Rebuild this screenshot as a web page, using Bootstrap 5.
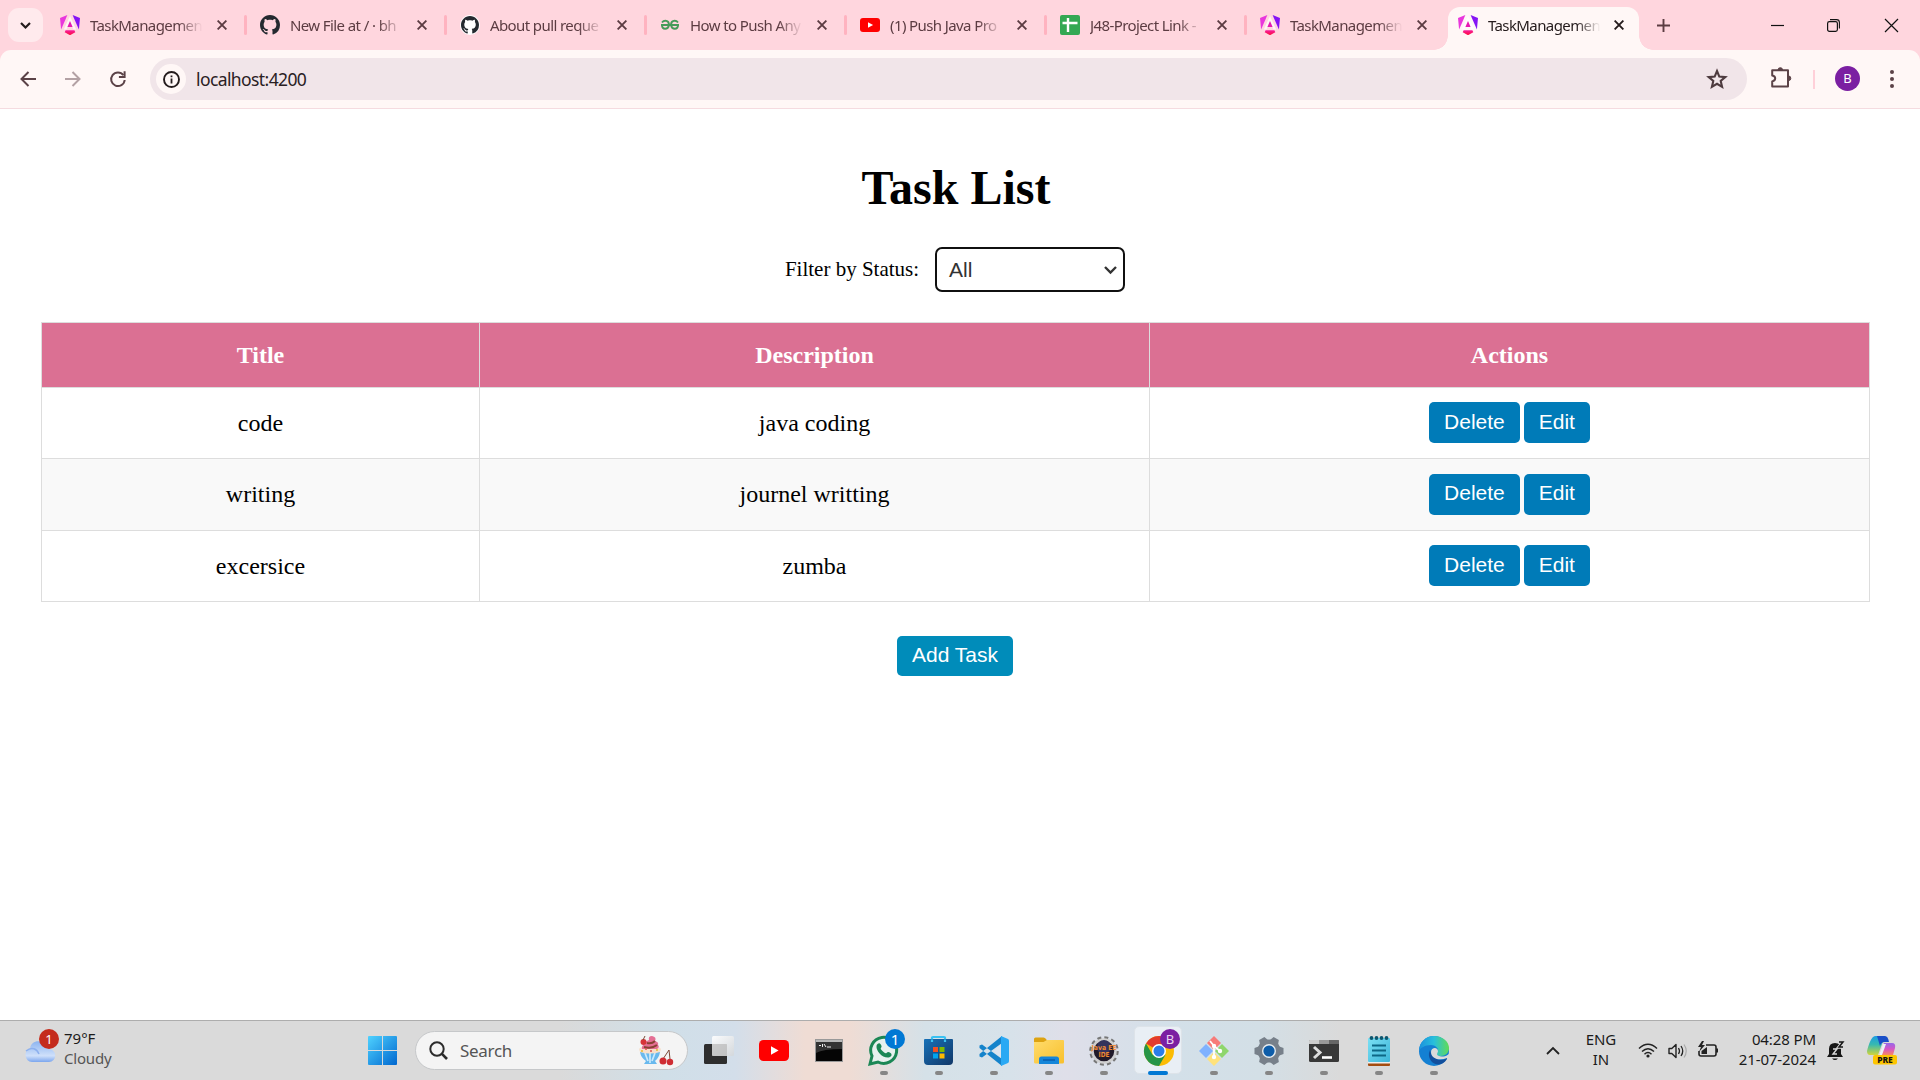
<!DOCTYPE html>
<html lang="en">
<head>
<meta charset="utf-8">
<title>Task List</title>
<link rel="stylesheet" href="https://cdn.jsdelivr.net/npm/bootstrap@5.3.0/dist/css/bootstrap.min.css">
<style>
body{width:1920px;height:1080px;overflow:hidden;background:#fff;color:#000;font-family:"Liberation Serif",serif}
svg{display:block;flex:none;overflow:visible}
.chrome-ui,.taskbar{font-family:"Noto Sans","Open Sans",sans-serif}
.tabstrip{height:50px;background:#ffd6de}
.tabsearch{width:35px;height:34px;margin:8px 4px 8px 8px;border-radius:11px;background:#ffeaed}
.tab{width:200px;height:50px;padding-left:13px;color:#5c3c42;position:relative}
.tab .fav{width:20px;height:20px}
.tab-title{width:116px;margin-left:10px;font-size:15px;letter-spacing:-.6px;line-height:24px;white-space:nowrap}
.fade-end{-webkit-mask-image:linear-gradient(90deg,#000 76%,transparent 97%);mask-image:linear-gradient(90deg,#000 76%,transparent 97%)}
.tab .x{margin-left:11px}
.tab.sep::after{content:"";position:absolute;right:0;top:15px;width:3px;height:20px;background:#ffb3c0;border-radius:2px}
.tab.active{width:191px;height:43px;margin-top:7px;margin-left:1px;padding-left:10px;padding-bottom:7px;border-radius:12px 12px 0 0;background:#fff7f6;color:#241b1c}
.tab.active::before,.tab.active::after{content:"";position:absolute;bottom:0;width:14px;height:14px}
.tab.active::before{left:-14px;background:radial-gradient(circle at 0 0,transparent 13.5px,#fff7f6 14px)}
.tab.active::after{right:-14px;background:radial-gradient(circle at 100% 0,transparent 13.5px,#fff7f6 14px)}
.wincontrols{color:#5c3c42}
.toolwrap{background:#ffd6de}
.toolbar{height:59px;background:#fff7f6;border-radius:11px 11px 0 0;border-bottom:1px solid #f5dbe0;padding-left:20px;color:#5b4247}
.omni{width:1597px;height:42px;border-radius:21px;background:#f1e5e9;margin-left:24px;padding:0 20px 0 6px}
.info{width:30px;height:30px;border-radius:50%;background:#fff7f6}
.url{font-size:17.5px;letter-spacing:-.6px;margin-left:10px;color:#2a2023}
.avatar{width:25px;height:25px;border-radius:50%;background:#7b1fa2;color:#fff;font-size:13px}
.page-area{height:911px;padding:0 51px 0 41px}
h1{font-size:48px;font-weight:700;line-height:56px;margin:51px 0 0;padding-left:2px}
.filter{margin-top:31px;height:45px;font-size:21px}
.status-select{width:190px;height:45px;border:2.5px solid #101010;border-radius:7px;font:21px "Liberation Sans",sans-serif;color:#333;padding:0 6px 0 12px;margin-left:16px;background:#fff}
.tasks{margin-top:30px;width:1829px;table-layout:fixed;border-collapse:collapse;font-size:24px;text-align:center;line-height:28px}
.tasks th,.tasks td{border:1px solid #ddd;padding:0}
.tasks th{background:#db7093;color:#fff;height:65px}
.tasks td{height:71px;padding-bottom:1px}
.tasks tbody tr:nth-child(even){background:#f9f9f9}
.tasks tbody tr:nth-child(even) td{height:72px}
.act{height:41px;border:0;border-radius:5px;background:#007bb8;color:#fff;font:21px "Liberation Sans",sans-serif;padding:0 15px 2px}
.act.add{background:#008cba;height:40px;margin-top:34px}
.taskbar{height:60px;border-top:1px solid #adadad;background:linear-gradient(90deg,#dadada 0,#dadada 560px,#d0dfe8 665px,#d3deea 735px,#efdcd4 805px,#efdcd4 850px,#d5e1e8 925px,#d7e2ea 1010px,#dfdfe9 1065px,#d3e0e9 1170px,#d3dfe6 1260px,#dadada 1340px,#dadada 100%);font-size:15px;line-height:20px;color:#1b1b1b}
.weather{width:368px;padding-left:24px;padding-bottom:5px}
.badge-n{position:absolute;width:20px;height:20px;border-radius:50%;color:#fff;font-size:13px;line-height:20px;text-align:center}
.searchbox{width:273px;height:39px;border-radius:20px;background:#f4f4f4;border:1px solid #c6c8ca;margin-left:18px;padding-left:13px;font-size:17px;color:#555}
.app{width:55px;height:59px;position:relative}
.app.run::after{content:"";position:absolute;left:24px;bottom:5px;width:8px;height:4px;border-radius:2px;background:#868686}
.app.cur::before{content:"";position:absolute;left:3px;top:5px;width:48px;height:48px;background:#e9eff5;border:1px solid #dde3e9;border-radius:5px}
.app.cur::after{left:17px;width:20px;background:#0078d4}
.app svg{position:relative}
.tray{margin-left:84px;height:59px}
.tray-text{padding-bottom:3px;letter-spacing:-.1px}
</style>
<script src="https://cdn.jsdelivr.net/npm/bootstrap@5.3.0/dist/js/bootstrap.bundle.min.js"></script>
</head>
<body>
<svg width="0" height="0" class="position-absolute">
<defs>
<linearGradient id="ng2" x1="0" y1="0" x2="0" y2="1"><stop offset="0" stop-color="#f51ea0"/><stop offset="1" stop-color="#ff0b3a"/></linearGradient>
<linearGradient id="win" x1="0" y1="0" x2="1" y2="1"><stop offset="0" stop-color="#4fd2ff"/><stop offset="1" stop-color="#0067cf"/></linearGradient>
<linearGradient id="cld" x1="0" y1="0" x2="0" y2="1"><stop offset="0" stop-color="#8cb4f0"/><stop offset=".7" stop-color="#cfe0fa"/><stop offset="1" stop-color="#7ba6ee"/></linearGradient>
<linearGradient id="tv" x1="0" y1="0" x2="1" y2="1"><stop offset="0" stop-color="#fff"/><stop offset="1" stop-color="#d4d7da"/></linearGradient>
<linearGradient id="store" x1="0" y1="0" x2="1" y2="1"><stop offset="0" stop-color="#1671b8"/><stop offset="1" stop-color="#113768"/></linearGradient>
<linearGradient id="fold" x1="0" y1="0" x2="1" y2="1"><stop offset="0" stop-color="#ffdc6c"/><stop offset="1" stop-color="#f8bf2c"/></linearGradient>
<linearGradient id="edge1" x1="0" y1="0" x2="1" y2="0"><stop offset="0" stop-color="#1c91dd"/><stop offset=".5" stop-color="#28bfdc"/><stop offset="1" stop-color="#62dc55"/></linearGradient>
<linearGradient id="note" x1="0" y1="0" x2="1" y2="1"><stop offset="0" stop-color="#7be0f4"/><stop offset="1" stop-color="#3bb4d8"/></linearGradient>
<linearGradient id="cop1" x1="0" y1="0" x2="0" y2="1"><stop offset="0" stop-color="#1b9de2"/><stop offset=".45" stop-color="#37b9b0"/><stop offset="1" stop-color="#d2d53a"/></linearGradient>
<linearGradient id="cop2" x1="0" y1="0" x2="0" y2="1"><stop offset="0" stop-color="#9568e8"/><stop offset=".5" stop-color="#d656c5"/><stop offset="1" stop-color="#f98860"/></linearGradient>
<symbol id="angular" viewBox="0 0 20 20"><path d="M0 3 7.4 0 1.1 14.5Z" fill="#e937dc"/><path d="M20 3 12.6 0 18.9 14.5Z" fill="#8514f5"/><path d="M5.6 15.2h8.800l.9 2.100L10 20.200l-5.300-2.900Z" fill="url(#ng2)"/><path d="M10 1 3.800 14.500h2.600L7.500 12h5l1.100 2.500h2.600L10 1Z" fill="#fff" fill-opacity=".75"/><path d="M10 6 7.400 12h5.200Z" fill="#e61bb1"/></symbol>
<symbol id="github" viewBox="0 0 16 16"><path d="M8 0C3.58 0 0 3.58 0 8c0 3.54 2.29 6.53 5.47 7.59.4.07.55-.17.55-.38 0-.19-.01-.82-.01-1.49-2.01.37-2.53-.49-2.69-.94-.09-.23-.48-.94-.82-1.13-.28-.15-.68-.52-.01-.53.63-.01 1.08.58 1.23.82.72 1.21 1.87.87 2.33.66.07-.52.28-.87.51-1.07-1.78-.2-3.64-.89-3.64-3.95 0-.87.31-1.59.82-2.15-.08-.2-.36-1.02.08-2.12 0 0 .67-.21 2.2.82.64-.18 1.32-.27 2-.27s1.36.09 2 .27c1.53-1.04 2.2-.82 2.2-.82.44 1.1.16 1.92.08 2.12.51.56.82 1.27.82 2.15 0 3.07-1.87 3.75-3.65 3.95.29.25.54.73.54 1.48 0 1.07-.01 1.93-.01 2.2 0 .21.15.46.55.38A8 8 0 0 0 16 8c0-4.42-3.58-8-8-8Z" fill="#24292f"/></symbol>
<symbol id="close" viewBox="0 0 10 10"><path d="M.6.6l8.800 8.800M9.400.6.6 9.400" stroke="currentColor" stroke-width="1.900"/></symbol>
<symbol id="youtube" viewBox="0 0 30 21"><rect width="30" height="21" rx="4.500" fill="#f00"/><path d="M12 6.200v8.600l7.600-4.300Z" fill="#fff"/></symbol>
</defs></svg>

<header class="chrome-ui">
<div class="tabstrip d-flex">
 <div class="tabsearch d-flex align-items-center justify-content-center"><svg width="11" height="7" viewBox="0 0 11 7"><path d="M1 1l4.500 4.500L10 1" fill="none" stroke="#241b1c" stroke-width="2.200"/></svg></div>
 <div class="tab sep d-flex align-items-center"><svg class="fav"><use href="#angular"/></svg><div class="tab-title fade-end">TaskManagemen</div><svg class="x" width="10" height="10"><use href="#close"/></svg></div>
 <div class="tab sep d-flex align-items-center"><svg class="fav"><use href="#github"/></svg><div class="tab-title fade-end">New File at / · bh</div><svg class="x" width="10" height="10"><use href="#close"/></svg></div>
 <div class="tab sep d-flex align-items-center"><svg class="fav"><circle cx="10" cy="10" r="10" fill="#fff"/><use href="#github" x="1" y="1" width="18" height="18"/></svg><div class="tab-title fade-end">About pull reque</div><svg class="x" width="10" height="10"><use href="#close"/></svg></div>
 <div class="tab sep d-flex align-items-center"><svg class="fav" viewBox="0 0 20 20"><path d="M2 7.500C4 5 9 5 9 10H2c0 5 6 5 7 0M18 7.500C16 5 11 5 11 10h7c0 5-6 5-7 0M1 10h18" fill="none" stroke="#459b59" stroke-width="1.900"/></svg><div class="tab-title fade-end">How to Push Any</div><svg class="x" width="10" height="10"><use href="#close"/></svg></div>
 <div class="tab sep d-flex align-items-center"><svg class="fav"><use href="#youtube" x="0" y="3" width="20" height="14"/></svg><div class="tab-title fade-end">(1) Push Java Pro</div><svg class="x" width="10" height="10"><use href="#close"/></svg></div>
 <div class="tab sep d-flex align-items-center"><svg class="fav"><rect width="20" height="20" rx="2" fill="#34a853"/><path d="M2.500 8h15M8 3v14" stroke="#fff" stroke-width="2.400"/></svg><div class="tab-title fade-end">J48-Project Link -</div><svg class="x" width="10" height="10"><use href="#close"/></svg></div>
 <div class="tab d-flex align-items-center"><svg class="fav"><use href="#angular"/></svg><div class="tab-title fade-end">TaskManagemen</div><svg class="x" width="10" height="10"><use href="#close"/></svg></div>
 <div class="tab active d-flex align-items-center"><svg class="fav"><use href="#angular"/></svg><div class="tab-title fade-end">TaskManagemen</div><svg class="x" width="10" height="10" style="margin-left:10px"><use href="#close"/></svg></div>
 <div class="wincontrols d-flex align-items-center flex-grow-1">
  <svg width="13" height="13" viewBox="0 0 13 13" style="margin-left:18px;margin-right:101px"><path d="M6.500 0v13M0 6.500h13" stroke="currentColor" stroke-width="1.900"/></svg>
  <svg width="13" height="13" viewBox="0 0 13 13"><path d="M0 6.500h13" stroke="#111" stroke-width="1.200"/></svg>
  <svg width="13" height="13" viewBox="0 0 13 13" style="margin-left:43px"><path d="M3 .6h6.500q2.900 0 2.900 2.900v6" fill="none" stroke="#111" stroke-width="1.100"/><rect x=".6" y="2.600" width="9.800" height="9.800" rx="1.800" fill="none" stroke="#111" stroke-width="1.200"/></svg>
  <svg width="13" height="13" viewBox="0 0 13 13" style="margin-left:45px"><path d="M0 0l13 13M13 0 0 13" stroke="#111" stroke-width="1.200"/></svg>
 </div>
</div>
<div class="toolwrap"><div class="toolbar d-flex align-items-center">
 <svg width="16" height="16" viewBox="0 0 16 16"><path d="M16 8H2M8.500 1 1.500 8l7 7" fill="none" stroke="currentColor" stroke-width="2"/></svg>
 <svg width="16" height="16" viewBox="0 0 16 16" style="margin-left:29px;color:#b3a1a4"><path d="M0 8h14M7.500 1l7 7-7 7" fill="none" stroke="currentColor" stroke-width="2"/></svg>
 <svg width="16" height="16" viewBox="0 0 16 16" style="margin-left:29px"><path d="M13.400 4.200A6.800 6.800 0 1 0 14.700 9" fill="none" stroke="currentColor" stroke-width="2"/><path d="M14.600.3v5.800H8.900" fill="none" stroke="currentColor" stroke-width="2"/></svg>
 <div class="omni d-flex align-items-center"><div class="info d-flex align-items-center justify-content-center"><svg width="17" height="17" viewBox="0 0 17 17"><circle cx="8.500" cy="8.500" r="7.500" fill="none" stroke="#241b1c" stroke-width="1.900"/><path d="M8.500 7.400v5M8.500 4.400v1.800" stroke="#241b1c" stroke-width="1.800"/></svg></div>
 <span class="url">localhost:4200</span>
 <svg class="ms-auto" width="20" height="20" viewBox="0 0 20 20"><path d="M10 2l2.300 5.600 6 .5-4.600 3.900 1.400 5.900L10 14.800l-5.100 3.100 1.400-5.900L1.700 8.100l6-.5Z" fill="none" stroke="#4e3b3f" stroke-width="2.100"/></svg></div>
 <svg width="20" height="21" viewBox="0 0 20 21" style="margin-left:24px;margin-top:-3px"><path d="M1.200 3.200H17V19.600H1.200v-5.200c4-.8 4-5.300 0-6Z" fill="none" stroke="currentColor" stroke-width="2" stroke-linejoin="round"/><path d="M7 3a2.300 2.300 0 0 1 4.600 0M17.500 9a2.300 2.300 0 0 1 0 4.600" fill="currentColor" stroke="currentColor"/></svg>
 <i style="width:2px;height:19px;background:#ffd0d9;margin-left:22px"></i>
 <span class="avatar d-flex align-items-center justify-content-center" style="margin-left:20px;margin-top:-1px">B</span>
 <svg width="4" height="18" viewBox="0 0 4 18" style="margin-left:30px"><g fill="currentColor"><circle cx="2" cy="2" r="2"/><circle cx="2" cy="9" r="2"/><circle cx="2" cy="16" r="2"/></g></svg>
</div></div>
</header>

<main class="page-area overflow-hidden">
 <h1 class="text-center">Task List</h1>
 <div class="filter d-flex align-items-center justify-content-center"><label for="st">Filter by Status:</label>
  <div id="st" class="status-select d-flex align-items-center justify-content-between"><span>All</span><svg width="13" height="8" viewBox="0 0 13 8"><path d="M1 1l5.500 5.500L12 1" fill="none" stroke="#333" stroke-width="2.400"/></svg></div></div>
 <table class="tasks">
  <colgroup><col style="width:438px"><col style="width:670px"><col></colgroup>
  <thead><tr><th>Title</th><th>Description</th><th>Actions</th></tr></thead>
  <tbody>
   <tr><td>code</td><td>java coding</td><td><div class="d-flex justify-content-center gap-1"><button class="act">Delete</button><button class="act">Edit</button></div></td></tr>
   <tr><td>writing</td><td>journel writting</td><td><div class="d-flex justify-content-center gap-1"><button class="act">Delete</button><button class="act">Edit</button></div></td></tr>
   <tr><td>excersice</td><td>zumba</td><td><div class="d-flex justify-content-center gap-1"><button class="act">Delete</button><button class="act">Edit</button></div></td></tr>
  </tbody>
 </table>
 <div class="text-center"><button class="act add">Add Task</button></div>
</main>

<footer class="taskbar d-flex align-items-center">
 <div class="weather d-flex align-items-center"><div class="position-relative"><svg width="32" height="36" viewBox="0 0 32 36"><path d="M8 32a7 7 0 0 1-2-13.500C7 12 13 10 18 12c4 1 6 4 6.500 7A6.500 6.500 0 0 1 25 32Z" fill="url(#cld)"/><path d="M2 21c6-5 11-2 13 3" fill="none" stroke="#8cb0ee" stroke-width="1.500"/></svg><span class="badge-n" style="left:15px;top:-1px;background:#c42b1c">1</span></div><div style="margin-left:8px"><div>79°F</div><div style="color:#555;letter-spacing:-.2px">Cloudy</div></div></div>
 <svg width="29" height="29" viewBox="0 0 29 29"><path d="M1 0h13v14H0V1Q0 0 1 0ZM15 0h13q1 0 1 1v13H15ZM0 15h14v14H1q-1 0-1-1ZM15 15h14v13q0 1-1 1H15Z" fill="url(#win)"/></svg>
 <div class="searchbox d-flex align-items-center"><svg width="19" height="19" viewBox="0 0 19 19"><circle cx="8" cy="8" r="6.700" fill="none" stroke="#2b2b2b" stroke-width="2"/><path d="M12.700 12.700 18 18" stroke="#2b2b2b" stroke-width="2.600"/></svg><span style="margin-left:12px;letter-spacing:-.3px">Search</span>
  <svg class="ms-auto" width="36" height="30" viewBox="0 0 36 30" style="margin-right:13px"><path d="M2 16h20q-1 6-5 9l2 3H6l2-3Q3 22 2 16Z" fill="#69b9ee"/><path d="M7 17l3 8M12 17v10M17 17l-3 8" stroke="#cdeafb" stroke-width="1.700"/><path d="M2 16q-3-5 4-5h12q7 0 4 5-10 3-20 0Z" fill="#f7dfca"/><path d="M4 13q-1-4 4-5-1-3 3-4-1-4 3-4 5 1 3 5 4 1 3 4 2 2-1 4Z" fill="#e56f94"/><path d="M6 11q8 2 13-2M9 7q5 1 8-2" stroke="#894333" stroke-width="2" fill="none"/><circle cx="5.500" cy="6" r="3" fill="#d63438"/><path d="M5 4l2-4M31 14l-6 9M31 14l1 9" stroke="#7d4938" fill="none"/><circle cx="25" cy="25" r="3.500" fill="#cf2d33"/><circle cx="32" cy="26" r="3.200" fill="#cf2d33"/><circle cx="4" cy="15" r="1" fill="#e4bb30"/><circle cx="8" cy="13" r="1" fill="#d55"/><circle cx="13" cy="15" r="1" fill="#d55"/><circle cx="19" cy="14" r="1" fill="#e4bb30"/></svg></div>
 <div class="d-flex" style="margin-left:3px">
  <div class="app d-flex align-items-center justify-content-center"><svg width="30" height="30" viewBox="0 0 30 30"><rect y="8" width="23" height="20" rx="1.500" fill="#2e2e2e"/><rect x="8" y="0" width="22" height="20" rx="1.500" fill="url(#tv)" fill-opacity=".9"/><path d="M8 8h15v12H8Z" fill="#bbb" fill-opacity=".6"/></svg></div>
  <div class="app d-flex align-items-center justify-content-center"><svg width="30" height="21"><use href="#youtube"/></svg></div>
  <div class="app d-flex align-items-center justify-content-center"><svg width="28" height="23" viewBox="0 0 28 23"><rect x=".5" y=".5" width="27" height="22" fill="#050505" stroke="#999"/><path d="M1 1h26v2H1Z" fill="#b8b8b8"/><path d="M1 3h26v7Q8 10 1 14Z" fill="#333"/><path d="M4 6.500h2M7.500 5v3M9 5l2 3M12 8h4" stroke="#eee"/></svg></div>
  <div class="app run d-flex align-items-center justify-content-center"><svg width="31" height="31" viewBox="0 0 31 31"><path d="M2 29l2-8A13 13 0 1 1 10 27Z" fill="#e7f1ee" stroke="#1b8755" stroke-width="3"/><path d="M9.500 9c2-2 3.500 0 4 2s-2 2 0 4 4 4 5 3 2-1.500 4 0 1 4-2 4.500C14 23 8 16 8.500 11q0-1 1-2Z" fill="#1b8755"/></svg><span class="badge-n" style="left:29px;top:8px;background:#0078d4;font-size:15px">1</span></div>
  <div class="app run d-flex align-items-center justify-content-center"><svg width="29" height="29" viewBox="0 0 29 29"><path d="M8 6V1.500Q8 1 9 1h11q1 0 1 .5V6" fill="none" stroke="#39c1f2" stroke-width="2.200"/><path d="M0 4q0-1 1-1h27q1 0 1 1v21q0 4-4 4H4q-4 0-4-4Z" fill="url(#store)"/><path d="M8 6V3.500M21 6V3.500" stroke="#39c1f2" stroke-width="2.200"/><path d="M9 11h5v5H9Z" fill="#f25022"/><path d="M15.500 11h5v5h-5Z" fill="#7fba00"/><path d="M9 17.500h5v5H9Z" fill="#00a4ef"/><path d="M15.500 17.500h5v5h-5Z" fill="#ffb900"/></svg></div>
  <div class="app run d-flex align-items-center justify-content-center"><svg width="30" height="30" viewBox="0 0 30 30"><path d="M.5 9.500 3 8.500 23 23v7L.5 12ZM.5 20.500l2.500 1L23 7V0L.5 18Z" fill="#1583cb"/><path d="M22 0l7 3q1 .5 1 2v20q0 1.500-1 2l-7 3Z" fill="#2aa9f4"/><path d="M22 9v12l-8-6Z" fill="#dce4ef"/></svg></div>
  <div class="app run d-flex align-items-center justify-content-center"><svg width="30" height="28" viewBox="0 0 30 28"><path d="M0 7V2q0-1.500 1.500-1.500h8Q11 .5 12 2l2 3Z" fill="#dda312"/><path d="M0 5h9.500L13 3h16q1 0 1 1v21q0 1.500-1.500 1.500h-27Q0 26.500 0 25Z" fill="url(#fold)"/><path d="M5 27v-5q0-2.500 2.500-2.500h15q2.500 0 2.500 2.500v5Z" fill="#1686d9"/><path d="M9 23h12" stroke="#0b5dac" stroke-width="1.500"/></svg></div>
  <div class="app run d-flex align-items-center justify-content-center"><svg width="30" height="30" viewBox="0 0 30 30"><circle cx="15" cy="15" r="13" fill="none" stroke="#777" stroke-width="3.500" stroke-dasharray="3.800 3"/><circle cx="15" cy="15" r="11.500" fill="#211a29" stroke="#d0d0d0" stroke-width="2.500"/><circle cx="15" cy="11" r="7" fill="#34335c"/><text x="15" y="14" text-anchor="middle" font-family="DejaVu Sans" font-weight="700" font-size="7" fill="#ef8a34" textLength="25" lengthAdjust="spacingAndGlyphs">Java EE</text><text x="15" y="20.500" text-anchor="middle" font-family="DejaVu Sans" font-weight="700" font-size="7" fill="#ef8a34" textLength="11" lengthAdjust="spacingAndGlyphs">IDE</text></svg></div>
  <div class="app run cur d-flex align-items-center justify-content-center"><svg width="30" height="30" viewBox="0 0 30 30"><circle cx="15" cy="15" r="15" fill="#fbbc04"/><path d="M15 15 2 7.500A15 15 0 0 1 28 7.500H15Z" fill="#e33b2e"/><path d="M2 7.500A15 15 0 0 0 15 30L21.500 18.700 15 15 8.500 18.700Z" fill="#269547"/><path d="M15 7.500h13" stroke="#e33b2e"/><circle cx="15" cy="15" r="7" fill="#fff"/><circle cx="15" cy="15" r="5.500" fill="#2b7de9"/></svg><span class="badge-n" style="left:29px;top:8px;background:#7b1fa2;color:#e9d3f1">B</span></div>
  <div class="app run d-flex align-items-center justify-content-center"><svg width="30" height="30" viewBox="0 0 30 30"><path d="M15 0l7 7-7 7-7-7Z" fill="#f77b79"/><path d="M23 8l7 7-7 7-7-7Z" fill="#8fd66c"/><path d="M7 8l7 7-7 7-7-7Z" fill="#80b2ff"/><path d="M15 16l7 7-7 7-7-7Z" fill="#ffe27b"/><path d="M11 5l4 5v12M15 10l6 5" fill="none" stroke="#fff" stroke-width="1.800"/><g fill="#fff"><circle cx="15" cy="10" r="2.200"/><circle cx="21" cy="15" r="2.200"/><circle cx="15" cy="21" r="2.200"/></g></svg></div>
  <div class="app run d-flex align-items-center justify-content-center"><svg width="30" height="30" viewBox="0 0 30 30"><g fill="#77808a"><circle cx="15" cy="15" r="11.500"/><path d="M10 6l2-5.500h6L20 6v18l-2 5.500h-6L10 24Z" transform="rotate(30 15 15)"/><path d="M10 6l2-5.500h6L20 6v18l-2 5.500h-6L10 24Z" transform="rotate(90 15 15)"/><path d="M10 6l2-5.500h6L20 6v18l-2 5.500h-6L10 24Z" transform="rotate(150 15 15)"/></g><circle cx="15" cy="15" r="7" fill="#e8edf0"/><circle cx="15" cy="15" r="5.600" fill="#0e5da9"/></svg></div>
  <div class="app run d-flex align-items-center justify-content-center"><svg width="30" height="22" viewBox="0 0 30 22"><rect width="30" height="22" rx="1.500" fill="#383838"/><path d="M0 4V1q0-1 1-1h9v4Z" fill="#ccc"/><path d="M10 0h10v4H10Z" fill="#999"/><path d="M20 0h9q1 0 1 1v3H20Z" fill="#666"/><path d="M5 7l6 5.500L5 18" fill="none" stroke="#ddd" stroke-width="3"/><path d="M13 17.500h10" stroke="#fff" stroke-width="2.600"/></svg></div>
  <div class="app run d-flex align-items-center justify-content-center"><svg width="22" height="30" viewBox="0 0 22 30"><path d="M0 26h22v3q0 1-1 1H1q-1 0-1-1Z" fill="#a34c10"/><path d="M0 25h22v2.500H0Z" fill="#eee"/><rect y="2" width="22" height="24" rx="1" fill="url(#note)"/><path d="M4 9.500h14M4 14.500h14M4 19.500h14" stroke="#0d6786" stroke-width="1.800"/><g fill="#0d566e"><circle cx="3.500" cy="2" r="1.900"/><circle cx="8.500" cy="2" r="1.900"/><circle cx="13.500" cy="2" r="1.900"/><circle cx="18.500" cy="2" r="1.900"/></g></svg></div>
  <div class="app run d-flex align-items-center justify-content-center"><svg width="30" height="30" viewBox="0 0 30 30"><circle cx="15" cy="15" r="15" fill="#1480d3"/><path d="M0 15C0 6 7 0 15 0c9 0 15 6 15 12 0 5-4 8-8 8-3 0-5-1-4-3 3-5-2-8-6-8C6 9 1 12 0 15Z" fill="url(#edge1)"/><path d="M10 17c-1 7 5 13 12 11 3-1 6-4 6-6-6 4-15 2-17-8Z" fill="#124f9d"/><path d="M12 16c0-4 6-6 7-1 0 2-2 3 0 4.500 3 2 7 1 9.500-.5l1.500-1v6l-2-2c-7 3-16 1-16-6Z" fill="#dadada"/></svg></div>
 </div>
 <div class="tray d-flex align-items-center">
  <svg width="14" height="8" viewBox="0 0 14 8" style="margin-left:1px"><path d="M1 7l6-6 6 6" fill="none" stroke="#222" stroke-width="1.800"/></svg>
  <div class="tray-text text-center" style="width:32px;margin-left:25px">ENG<br>IN</div>
  <svg width="20" height="15" viewBox="0 0 20 15" style="margin-left:21px"><path d="M1 5.500q9-8.500 18 0M4 8.500q6-5.600 12 0M6.500 11.200q3.500-3.300 7 0" fill="none" stroke="#222" stroke-width="1.500"/><circle cx="10" cy="13" r="1.600" fill="#222"/></svg>
  <svg width="20" height="16" viewBox="0 0 20 16" style="margin-left:10px"><path d="M1 5.500h2.800L8 1.500v13l-4.200-4H1Z" fill="none" stroke="#222" stroke-width="1.400" stroke-linejoin="round"/><path d="M10.500 5q2 3 0 6M13 3q3.500 5 0 10" fill="none" stroke="#222" stroke-width="1.300"/><path d="M16 1.500q4.500 6.500 0 13" fill="none" stroke="#aaa" stroke-width="1.200"/></svg>
  <svg width="20" height="17" viewBox="0 0 20 17" style="margin-left:10px;margin-top:-2px"><path d="M8 4h8q2 0 2 2v7q0 2-2 2H3q-2 0-2-2v-3" fill="none" stroke="#222" stroke-width="1.600"/><path d="M18 7.500h2v4h-2M3.500 13v-3L9 6v7ZM4 0 0 6h3L1 11l6-7H4l2-4Z" fill="#222"/></svg>
  <div class="tray-text text-end text-nowrap" style="width:78px;margin-left:20px"><div>04:28 PM</div><div style="margin-left:-10px">21-07-2024</div></div>
  <svg width="18" height="20" viewBox="0 0 18 20" style="margin-left:11px"><path d="M0 16l2-3V8q0-6 6-6 6 0 6 6v5l2 3ZM5 17.500h6q-3 3-6 0Z" fill="#171717"/><path d="M12 1h4l-4 5h4" fill="none" stroke="#dadada" stroke-width="3.400"/><path d="M12 1h4l-4 5h4" fill="none" stroke="#171717" stroke-width="1.500"/><path d="M6 8h4l-4 5h4" fill="none" stroke="#dadada" stroke-width="1.400"/></svg>
  <svg width="30" height="30" viewBox="0 0 30 30" style="margin-left:22px"><path d="M0 15C2 8 4 0 9 0h9l-3 8-4 11H3q-3 0-3-4Z" fill="url(#cop1)"/><path d="M10 0h8q3 0 4 6h-4q-4 0-5 4Z" fill="#194fc7"/><path d="M17 7h8q4 0 3 5l-2 7H12Z" fill="url(#cop2)"/><path d="M16 8h3l-4 11h-3Z" fill="#eef1f5"/><rect x="6" y="19" width="24" height="9.500" rx="2" fill="#fdc500"/><text x="18" y="26.800" font-family="Noto Sans" font-weight="800" font-size="8.500" text-anchor="middle" fill="#111">PRE</text></svg>
 </div>
</footer>
</body>
</html>
